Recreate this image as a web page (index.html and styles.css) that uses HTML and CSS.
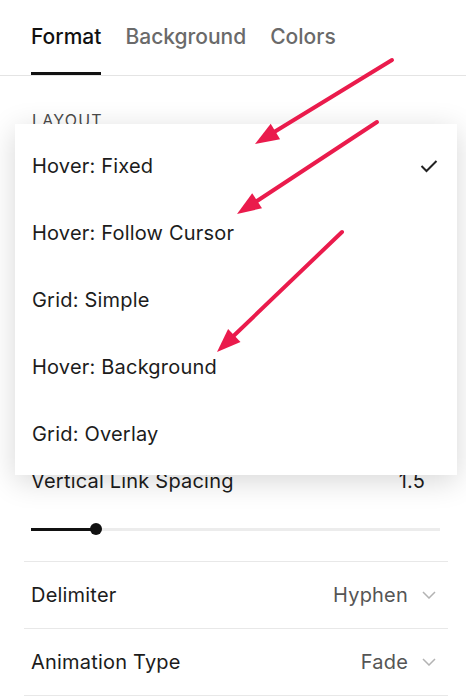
FILE: index.html
```html
<!DOCTYPE html>
<html lang="en">
  <head>
    <meta charset="UTF-8" />
    <meta name="viewport" content="width=device-width, initial-scale=1.0" />
    <title>Navigation Design</title>
    <link rel="stylesheet" href="styles.css">
  </head>
  <body>
    <nav class="tabs">
      <div class="tab active">Format</div>
      <div class="tab">Background</div>
      <div class="tab">Colors</div>
    </nav>

    <div class="panel">
      <div class="group-label">Layout</div>
      <div class="layout-select"></div>

      <div class="range-setting">
        <div class="range-head">
          <span>Vertical Link Spacing</span>
          <span>1.5</span>
        </div>
        <div class="range">
          <div class="range-fill"></div>
          <div class="range-thumb"></div>
          <div class="range-rest"></div>
        </div>
      </div>

      <div class="select-row">
        <span>Delimiter</span>
        <span class="select-value">Hyphen
          <svg class="chevron" width="14" height="8" viewBox="0 0 14 8"><polyline points="1,1 7,7 13,1" fill="none" stroke="#b3b3b3" stroke-width="1.5"/></svg>
        </span>
      </div>
      <div class="select-row">
        <span>Animation Type</span>
        <span class="select-value">Fade
          <svg class="chevron" width="14" height="8" viewBox="0 0 14 8"><polyline points="1,1 7,7 13,1" fill="none" stroke="#b3b3b3" stroke-width="1.5"/></svg>
        </span>
      </div>
    </div>

    <!-- layout dropdown, open -->
    <ul class="menu">
      <li class="menu-item">Hover: Fixed
        <svg width="18" height="14" viewBox="0 0 18 14"><polyline points="1.5,7 6.5,12 16.5,2" fill="none" stroke="#222" stroke-width="2"/></svg>
      </li>
      <li class="menu-item">Hover: Follow Cursor</li>
      <li class="menu-item">Grid: Simple</li>
      <li class="menu-item">Hover: Background</li>
      <li class="menu-item">Grid: Overlay</li>
    </ul>

    <svg class="arrows" width="466" height="700" viewBox="0 0 466 700">
      <g stroke="#ea1b4c" stroke-width="4" stroke-linecap="round" fill="#ea1b4c">
        <line x1="392" y1="60" x2="275" y2="131.5"/>
        <polygon points="255,144 280.1,139.2 270.7,123.8" stroke="none"/>
        <line x1="377" y1="122" x2="257" y2="201"/>
        <polygon points="237,214 262,208.3 252.2,193.3" stroke="none"/>
        <line x1="342" y1="232" x2="234" y2="335.5"/>
        <polygon points="217,352 240.5,341.9 228.1,328.9" stroke="none"/>
      </g>
    </svg>
  </body>
</html>
```

FILE: styles.css
```css
body {
  margin: 0;
  background: #fff;
  color: #1c1c1c;
  font-family: Inter, "Liberation Sans", sans-serif;
  font-size: 20px;
  letter-spacing: 0.2px;
}

.tabs {
  display: flex;
  gap: 24px;
  height: 76px;
  padding-left: 31px;
  border-bottom: 1px solid #e4e4e4;
  box-sizing: border-box;
}
.tab {
  padding-top: 24px;
  color: #6a6a6a;
  font-size: 21px;
  font-weight: 500;
  letter-spacing: 0;
  box-sizing: border-box;
}
.tab.active {
  color: #111;
  border-bottom: 3px solid #111;
}

.panel {
  padding: 0 18px 0 24px;
}
.group-label {
  margin-top: 34px;
  padding-left: 8px;
  font-size: 16px;
  letter-spacing: 1.2px;
  text-transform: uppercase;
  color: #4a4a4a;
}
.layout-select {
  height: 337px;
}

.range-setting {
  padding: 0 0 0 7px;
  border-bottom: 1px solid #e8e8e8;
}
.range-head {
  display: flex;
  justify-content: space-between;
  padding-right: 23px;
  line-height: 28px;
}
.range {
  display: flex;
  align-items: center;
  height: 12px;
  margin: 28px 8px 26px 0;
}
.range-fill {
  width: 65px;
  height: 3px;
  background: #111;
}
.range-thumb {
  width: 12px;
  height: 12px;
  margin: 0 -6px;
  border-radius: 50%;
  background: #111;
  position: relative;
}
.range-rest {
  flex: 1;
  height: 3px;
  background: #ececec;
}

.select-row {
  display: flex;
  justify-content: space-between;
  align-items: center;
  height: 66px;
  padding: 0 12px 0 7px;
  border-bottom: 1px solid #e8e8e8;
}
.select-value {
  display: flex;
  align-items: center;
  gap: 14px;
  color: #555;
}

.menu {
  position: absolute;
  top: 124px;
  left: 15px;
  width: 442px;
  margin: 0;
  padding: 8px 0;
  list-style: none;
  background: #fff;
  box-shadow: 0 6px 28px rgba(0, 0, 0, 0.16);
}
.menu-item {
  display: flex;
  justify-content: space-between;
  align-items: center;
  height: 67px;
  padding: 0 19px 0 17px;
}

.arrows {
  position: absolute;
  top: 0;
  left: 0;
  pointer-events: none;
}
```
